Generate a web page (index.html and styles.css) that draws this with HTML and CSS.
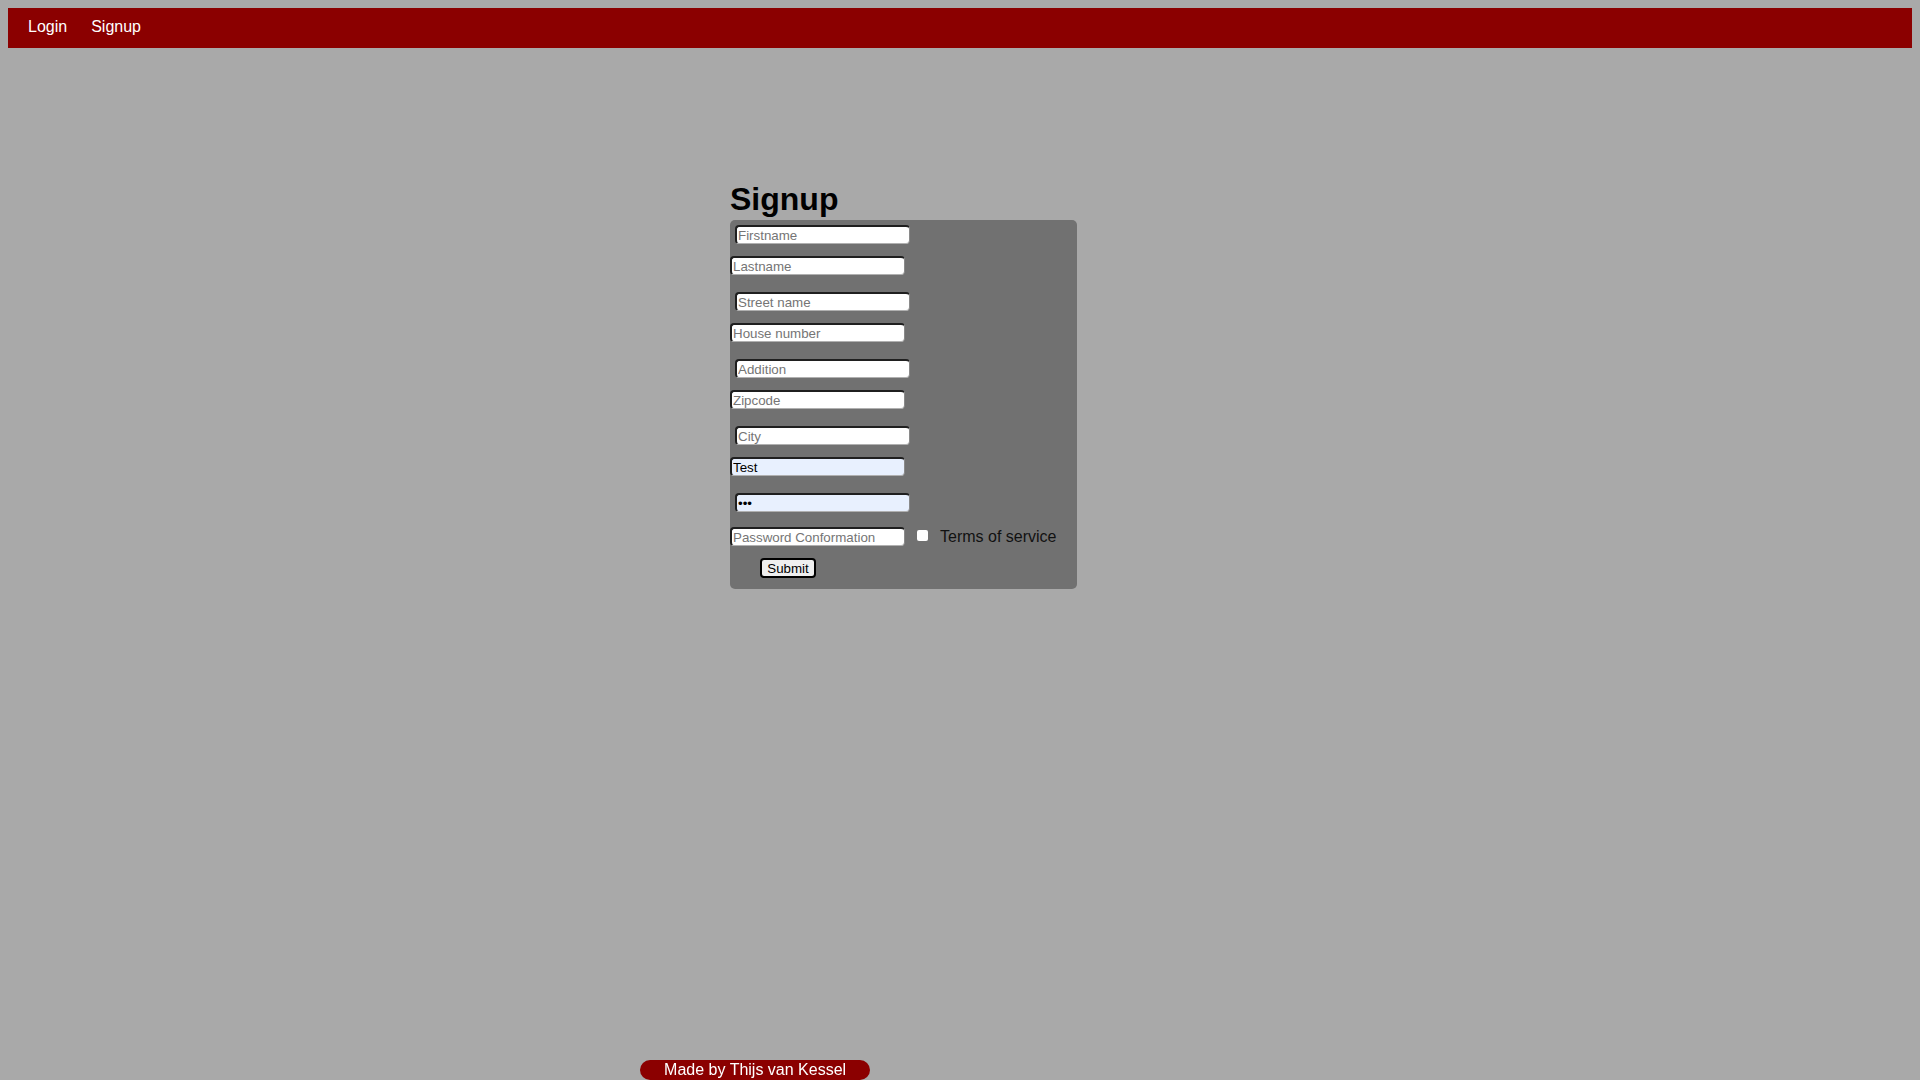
FILE: index.html
```html
<!DOCTYPE html>
<html lang="en">
<head>
<meta charset="utf-8">
<title>Signup</title>
<link rel="stylesheet" href="styles.css">
</head>
<body>
<nav class="topnav">
  <ul class="nav-list">
    <li><a href="#" class="nav-link">Login</a></li>
    <li><a href="#" class="nav-link">Signup</a></li>
  </ul>
</nav>
<main class="main">
  <h1 class="title">Signup</h1>
  <form class="signup-form">
    <input class="field field-a" type="text" placeholder="Firstname">
    <input class="field field-b" type="text" placeholder="Lastname">
    <input class="field field-a" type="text" placeholder="Street name">
    <input class="field field-b" type="text" placeholder="House number">
    <input class="field field-a" type="text" placeholder="Addition">
    <input class="field field-b" type="text" placeholder="Zipcode">
    <input class="field field-a" type="text" placeholder="City">
    <input class="field field-b filled" type="text" value="Test">
    <input class="field field-a filled" type="password" value="abc">
    <div class="terms-row">
      <input class="field field-b field-inline" type="password" placeholder="Password Conformation">
      <input class="check" type="checkbox" id="tos">
      <label class="terms" for="tos">Terms of service</label>
    </div>
    <button class="submit" type="button">Submit</button>
  </form>
</main>
<footer class="footer">Made by Thijs van Kessel</footer>
</body>
</html>
```

FILE: styles.css
```css
html, body {
  margin: 0;
  padding: 0;
}
body {
  margin: 8px;
  background: #a9a9a9;
  font-family: "Liberation Sans", Arial, sans-serif;
  min-height: 1064px;
}
.topnav {
  height: 40px;
  background: #8b0000;
  box-sizing: border-box;
  padding-top: 9px;
}
.nav-list {
  list-style: none;
  margin: 0;
  padding: 0 0 0 8px;
  display: flex;
}
.nav-link {
  display: block;
  padding: 0 12px;
  color: #fff;
  text-decoration: none;
  font-size: 16px;
  line-height: 20px;
}
.main {
  padding-top: 133px;
  margin-left: 722px;
}
.title {
  margin: 0 0 2px;
  font-size: 32px;
  line-height: 37px;
  font-weight: bold;
  color: #000;
}
.signup-form {
  width: 347px;
  box-sizing: border-box;
  background: #717171;
  border-radius: 5px;
  padding: 5px 0 11px;
}
.field {
  display: block;
  box-sizing: border-box;
  width: 175px;
  height: 19px;
  margin: 0;
  padding: 0 0 0 1px;
  background: #fff;
  border-style: solid;
  border-width: 2px 1px 1px 2px;
  border-color: #1f1f1f #8a8a8a #b0b0b0 #1f1f1f;
  border-radius: 4px;
  font-family: "Liberation Sans", Arial, sans-serif;
  font-size: 13.33px;
  color: #000;
  outline: none;
}
.field::placeholder {
  color: #757575;
}
.field-a {
  margin-left: 5px;
  margin-bottom: 12px;
}
.field-b {
  margin-bottom: 17px;
}
.filled {
  background: #e8f0fe;
}
.terms-row {
  display: flex;
  align-items: center;
  margin-top: 15px;
  margin-bottom: 12px;
}
.field-inline {
  margin-bottom: 0;
}
.check {
  appearance: none;
  -webkit-appearance: none;
  width: 11px;
  height: 11px;
  margin: 0 12px 0 12px;
  background: #fff;
  border: none;
  border-radius: 2px;
  position: relative;
  top: -1px;
}
.terms {
  font-size: 16px;
  color: #111;
  line-height: 19px;
}
.submit {
  display: block;
  margin-left: 30px;
  width: 56px;
  height: 20px;
  box-sizing: border-box;
  padding: 0;
  background: #efefef;
  border: 2px solid #000;
  border-radius: 4px;
  font-family: "Liberation Sans", Arial, sans-serif;
  font-size: 13.33px;
  color: #000;
}
.footer {
  position: fixed;
  bottom: 0;
  left: 33.33%;
  width: 12%;
  height: 20px;
  background: #8b0000;
  color: #fff;
  border-radius: 10px;
  text-align: center;
  font-size: 16px;
  line-height: 20px;
}
```
